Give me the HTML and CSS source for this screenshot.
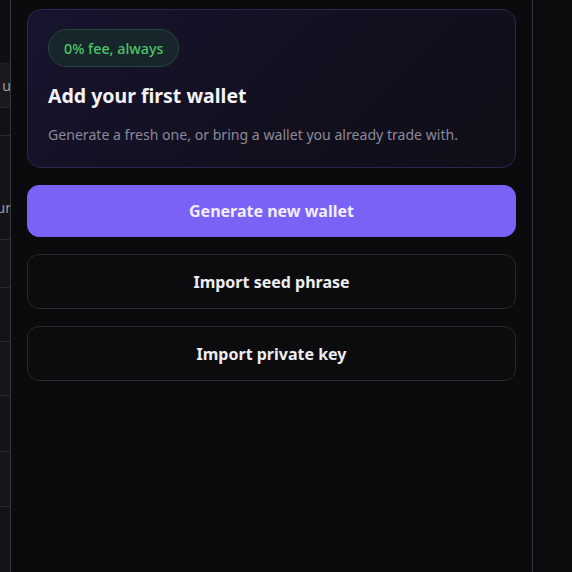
FILE: index.html
```html
<!DOCTYPE html>
<html lang="en">
<head>
<meta charset="utf-8">
<title>Add wallet</title>
<link rel="stylesheet" href="styles.css">
</head>
<body>
<div class="app">
  <aside class="strip">
    <div class="row r0"></div>
    <div class="row r1"><span>u</span></div>
    <div class="row r2"></div>
    <div class="row r3"></div>
    <div class="row r4"><span>ur</span></div>
    <div class="row r5"></div>
    <div class="row r6"></div>
    <div class="row r7"></div>
    <div class="row r8"></div>
    <div class="row r9"></div>
    <div class="row r10"></div>
  </aside>
  <main class="panel">
    <section class="card">
      <span class="badge">0% fee, always</span>
      <h1 class="title">Add your first wallet</h1>
      <p class="sub">Generate a fresh one, or bring a wallet you already trade with.</p>
    </section>
    <button class="btn primary">Generate new wallet</button>
    <button class="btn outline">Import seed phrase</button>
    <button class="btn outline">Import private key</button>
  </main>
  <div class="side"></div>
</div>
</body>
</html>
```
FILE: styles.css
```css
* { box-sizing: border-box; }
html, body { margin: 0; padding: 0; height: 100%; }
body {
  background: #0b0b0d;
  font-family: "Noto Sans", "Open Sans", sans-serif;
  color: #f0eff5;
}
.app {
  display: flex;
  height: 572px;
  overflow: hidden;
}
.strip {
  width: 10px;
  flex: none;
  background: #141316;
  display: flex;
  flex-direction: column;
  overflow: hidden;
}
.row {
  border-bottom: 1px solid #2a292d;
  display: flex;
  align-items: center;
  justify-content: flex-end;
  overflow: hidden;
  font-size: 14px;
  color: #9c9ba3;
  white-space: nowrap;
}
.row span { margin-right: -1px; }
.r0 { height: 64px; background: #0f0f11; border-bottom-color: #1f1e22; }
.r1 { height: 44px; background: #1a191d; }
.r2 { height: 28px; background: #121114; }
.r3 { height: 42px; border-bottom-color: #151417; }
.r4 { height: 62px; align-items: flex-start; padding-top: 20px; }
.r5 { height: 48px; background: #161519; }
.r6 { height: 54px; }
.r7 { height: 54px; background: #161519; }
.r8 { height: 56px; }
.r9 { height: 55px; background: #161519; }
.r10 { flex: 1; border-bottom: 0; }
.panel {
  flex: 1;
  border-left: 1px solid #38373c;
  border-right: 1px solid #38373c;
  background: #0b0b0d;
  padding: 9px 16px 0 16px;
  display: flex;
  flex-direction: column;
  gap: 17px;
}
.card {
  border: 1px solid #2b2650;
  border-radius: 14px;
  background: linear-gradient(135deg, #181430 0%, #12101f 55%, #0f0e18 100%);
  padding: 19px 20px 0 20px;
  height: 159px;
  display: flex;
  flex-direction: column;
  align-items: flex-start;
}
.badge {
  display: inline-flex;
  align-items: center;
  height: 38px;
  padding: 0 15px;
  border-radius: 19px;
  background: #17262a;
  border: 1px solid #2a4338;
  color: #4fc468;
  font-size: 14.3px;
  font-weight: 500;
}
.title {
  margin: 16px 0 0 0;
  font-size: 19.5px;
  line-height: 26px;
  font-weight: 700;
  color: #f4f3f8;
}
.sub {
  margin: 17px 0 0 0;
  font-size: 14.1px;
  line-height: 18px;
  color: #8b8998;
}
.btn {
  display: flex;
  align-items: center;
  justify-content: center;
  width: 100%;
  border-radius: 12px;
  font-family: inherit;
  font-size: 16px;
  font-weight: 700;
  cursor: pointer;
}
.primary {
  height: 52px;
  background: #7a62f6;
  border: 1px solid #7a62f6;
  color: #f1eef9;
}
.outline {
  height: 55px;
  background: #0c0c0e;
  border: 1px solid #2a2a2e;
  color: #eeedf2;
}
.side {
  width: 39px;
  flex: none;
  background: #0c0c0e;
}
```
